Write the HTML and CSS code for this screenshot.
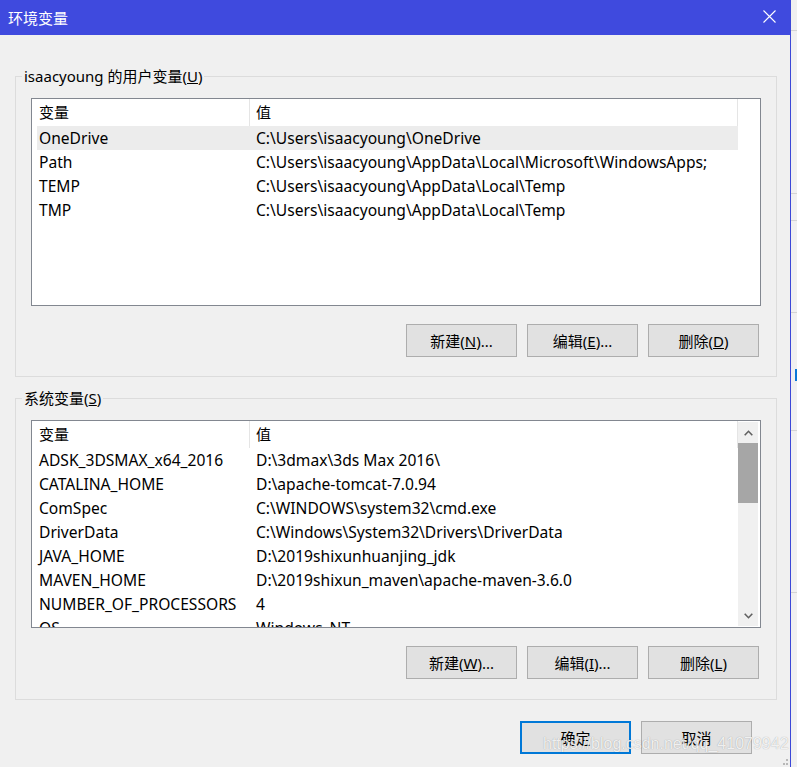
FILE: index.html
```html
<!DOCTYPE html>
<html lang="zh-CN">
<head>
<meta charset="utf-8">
<title>环境变量</title>
<link rel="stylesheet" href="styles.css">
</head>
<body>
<div class="screen">
  <div class="window">
    <div class="titlebar">
      <span class="title">环境变量</span>
      <svg class="close" width="13" height="13" viewBox="0 0 13 13"><path d="M0.5 0.5 L12.5 12.5 M12.5 0.5 L0.5 12.5" stroke="#ffffff" stroke-width="1.1" fill="none"/></svg>
    </div>
    <div class="content">
      <fieldset class="group">
        <legend>isaacyoung 的用户变量(<u>U</u>)</legend>
        <div class="list">
          <div class="list-main">
            <div class="list-header"><div class="hcell">变量</div><div class="hcell">值</div></div>
            <div class="row selected"><div class="cell">OneDrive</div><div class="cell val">C:\Users\isaacyoung\OneDrive</div></div>
            <div class="row"><div class="cell">Path</div><div class="cell val">C:\Users\isaacyoung\AppData\Local\Microsoft\WindowsApps;</div></div>
            <div class="row"><div class="cell">TEMP</div><div class="cell val">C:\Users\isaacyoung\AppData\Local\Temp</div></div>
            <div class="row"><div class="cell">TMP</div><div class="cell val">C:\Users\isaacyoung\AppData\Local\Temp</div></div>
          </div>
        </div>
        <div class="buttons">
          <button class="btn">新建(<u>N</u>)...</button>
          <button class="btn">编辑(<u>E</u>)...</button>
          <button class="btn">删除(<u>D</u>)</button>
        </div>
      </fieldset>
      <fieldset class="group group-sys">
        <legend>系统变量(<u>S</u>)</legend>
        <div class="list">
          <div class="list-main">
            <div class="list-header"><div class="hcell">变量</div><div class="hcell">值</div></div>
            <div class="row"><div class="cell">ADSK_3DSMAX_x64_2016</div><div class="cell val">D:\3dmax\3ds Max 2016\</div></div>
            <div class="row"><div class="cell">CATALINA_HOME</div><div class="cell val">D:\apache-tomcat-7.0.94</div></div>
            <div class="row"><div class="cell">ComSpec</div><div class="cell val">C:\WINDOWS\system32\cmd.exe</div></div>
            <div class="row"><div class="cell">DriverData</div><div class="cell val">C:\Windows\System32\Drivers\DriverData</div></div>
            <div class="row"><div class="cell">JAVA_HOME</div><div class="cell val">D:\2019shixunhuanjing_jdk</div></div>
            <div class="row"><div class="cell">MAVEN_HOME</div><div class="cell val">D:\2019shixun_maven\apache-maven-3.6.0</div></div>
            <div class="row"><div class="cell">NUMBER_OF_PROCESSORS</div><div class="cell val">4</div></div>
            <div class="row"><div class="cell">OS</div><div class="cell val">Windows_NT</div></div>
          </div>
          <div class="scrollbar">
            <div class="sb-btn"><svg width="9" height="6" viewBox="0 0 9 6"><path d="M0.7 5.3 L4.5 1.3 L8.3 5.3" stroke="#606060" stroke-width="1.6" fill="none"/></svg></div>
            <div class="sb-track"><div class="sb-thumb"></div></div>
            <div class="sb-btn"><svg width="9" height="6" viewBox="0 0 9 6"><path d="M0.7 0.7 L4.5 4.7 L8.3 0.7" stroke="#606060" stroke-width="1.6" fill="none"/></svg></div>
          </div>
        </div>
        <div class="buttons">
          <button class="btn">新建(<u>W</u>)...</button>
          <button class="btn">编辑(<u>I</u>)...</button>
          <button class="btn">删除(<u>L</u>)</button>
        </div>
      </fieldset>
      <div class="footer">
        <button class="btn btn-default">确定</button>
        <button class="btn">取消</button>
      </div>
    </div>
    <svg class="grip" width="9" height="8" viewBox="0 0 9 8"><rect x="6" y="0" width="2" height="2" fill="#b8b8b8"/><rect x="3" y="4" width="2" height="2" fill="#b8b8b8"/><rect x="6" y="4" width="2" height="2" fill="#b8b8b8"/></svg>
  </div>
  <div class="desktop">
    <div class="dk dk1"></div>
    <div class="dk dk2"></div>
    <div class="dk dk3"></div>
    <div class="dk dk4"></div>
    <div class="dk dk5"><div class="dk-blue"></div></div>
    <div class="dk dk6"></div>
    <div class="dk dk7"></div>
  </div>
  <div class="watermark">https://blog.csdn.net/qq_41079942</div>
</div>
</body>
</html>
```

FILE: styles.css
```css
html, body {
  margin: 0;
  padding: 0;
  background: #f0f0f0;
}
body {
  font-family: "Noto Sans", "Noto Sans CJK SC", sans-serif;
  font-size: 15px;
  color: #000;
}
.screen {
  position: relative;
  display: flex;
  width: 797px;
  height: 767px;
  overflow: hidden;
}
.window {
  position: relative;
  width: 791px;
  height: 767px;
  box-sizing: border-box;
  border-right: 1px solid #3c48d8;
  background: #f0f0f0;
  flex: none;
}
.titlebar {
  height: 35px;
  background: #3f4ade;
  color: #fff;
  display: flex;
  align-items: center;
  justify-content: space-between;
  padding: 0 14px 0 8px;
}
.title {
  font-size: 15px;
  line-height: 20px;
}
.close {
  display: block;
  margin-top: -3px;
}
.content {
  padding: 31px 13px 0 15px;
}
.group {
  box-sizing: border-box;
  width: 762px;
  margin: 0;
  padding: 12px 15px 19px 15px;
  border: 1px solid #dcdcdc;
  min-width: 0;
}
.group legend {
  margin-left: -9px;
  padding: 0 2px;
  line-height: 20px;
  font-size: 15px;
}
.group-sys {
  margin-top: 11px;
  padding-bottom: 20px;
}
.list {
  box-sizing: border-box;
  width: 730px;
  height: 208px;
  border: 1px solid #828790;
  background: #fff;
  display: flex;
  overflow: hidden;
}
.list-main {
  width: 706px;
  flex: none;
  overflow: hidden;
}
.list-header {
  display: flex;
  height: 27px;
  line-height: 27px;
}
.hcell {
  box-sizing: border-box;
  border-right: 1px solid #e5e5e5;
  height: 27px;
}
.hcell:first-child {
  width: 218px;
  padding-left: 7px;
}
.hcell:last-child {
  width: 488px;
  padding-left: 6px;
}
.row {
  display: flex;
  margin-left: 5px;
  width: 701px;
  height: 24px;
  line-height: 24px;
  white-space: nowrap;
  font-size: 15.6px;
}
.row.selected {
  background: #ececec;
}
.cell {
  box-sizing: border-box;
  width: 213px;
  padding-left: 2px;
  flex: none;
  overflow: hidden;
}
.cell.val {
  width: 488px;
  padding-left: 6px;
}
.scrollbar {
  width: 20px;
  margin: 1px 0 1px 0;
  background: #f0f0f0;
  display: flex;
  flex-direction: column;
}
.sb-btn {
  height: 21px;
  display: flex;
  align-items: center;
  justify-content: center;
  flex: none;
}
.sb-track {
  flex: 1;
}
.sb-thumb {
  height: 60px;
  background: #a6a6a6;
}
.buttons {
  display: flex;
  justify-content: flex-end;
  gap: 10px;
  margin-top: 18px;
  padding-right: 2px;
}
.btn {
  box-sizing: border-box;
  width: 111px;
  height: 33px;
  margin: 0;
  padding: 0;
  border: 1px solid #adadad;
  background: #e1e1e1;
  font-family: "Noto Sans", "Noto Sans CJK SC", sans-serif;
  font-size: 15px;
  color: #000;
  line-height: 20px;
}
.btn-default {
  border: 2px solid #0078d7;
}
.footer {
  display: flex;
  justify-content: flex-end;
  gap: 10px;
  margin-top: 21px;
  padding-right: 25px;
}
.grip {
  position: absolute;
  right: 1px;
  bottom: 0;
}
.desktop {
  flex: 1;
  display: flex;
  flex-direction: column;
  background: #f0f0f0;
}
.dk {
  box-sizing: border-box;
  border-bottom: 1px solid #d4d4d4;
  flex: none;
}
.dk1 { height: 31px; }
.dk2 { height: 163px; }
.dk3 { height: 27px; }
.dk4 { height: 92px; }
.dk5 { height: 118px; padding-top: 56px; }
.dk6 { height: 162px; }
.dk7 { flex: 1; border-bottom: none; }
.dk-blue {
  margin-left: 4px;
  width: 2px;
  height: 12px;
  background: #0a78d7;
}
.watermark {
  position: absolute;
  left: 543px;
  top: 734px;
  font-family: "Liberation Sans", Arial, sans-serif;
  font-size: 16px;
  line-height: 20px;
  color: rgba(255, 255, 255, 0.85);
  text-shadow: 0 0 1px rgba(0, 0, 0, 0.35);
  white-space: nowrap;
}
```
